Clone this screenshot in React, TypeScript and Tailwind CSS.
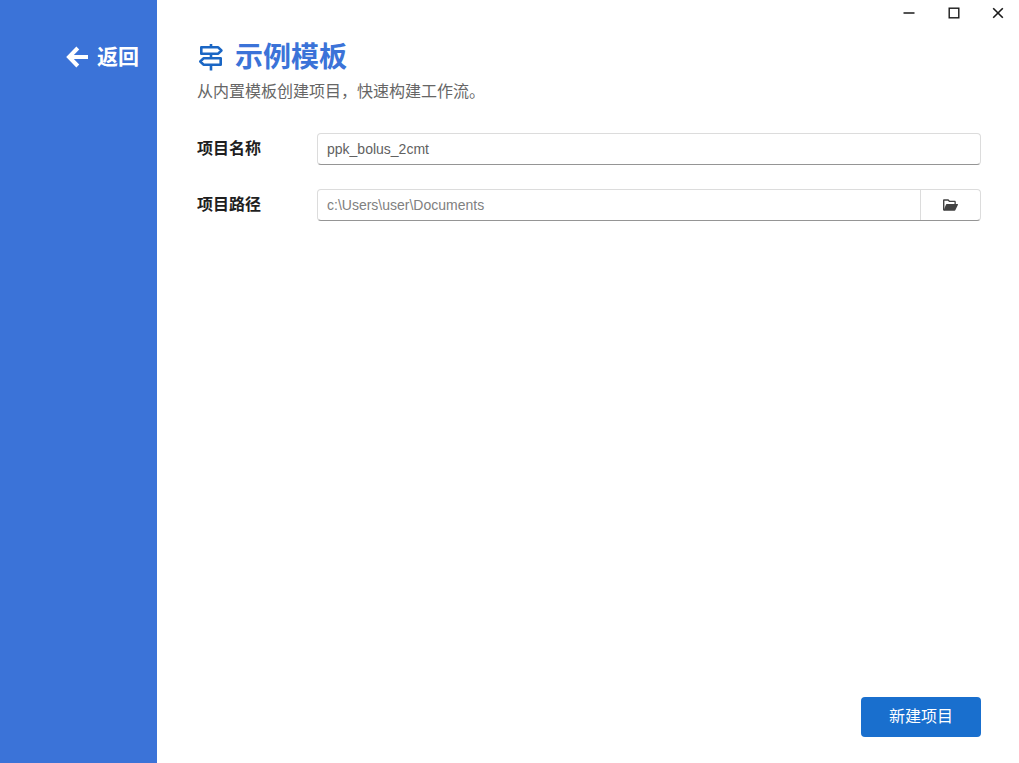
import React, { useState } from "react";

function BackArrow() {
  return (
    <svg width="22" height="22" viewBox="0 0 22 22" fill="none" stroke="currentColor" strokeWidth="4" aria-hidden="true">
      <path d="M11.800 2 3 11l8.800 9M3.500 11H22" />
    </svg>
  );
}

function Signpost() {
  return (
    <svg width="28" height="28" viewBox="0 0 28 28" fill="none" stroke="currentColor" strokeWidth="2.6" aria-hidden="true">
      <path d="M14 0v3M14 9.500v4.500M14 20.500v6" />
      <path d="M4.300 3.300h16.900l3.200 3.200-3.200 3.200H4.300z" strokeLinejoin="round" />
      <path d="M23.700 14.300H6.500l-3.200 3.200 3.200 3.200h17.200z" strokeLinejoin="round" />
    </svg>
  );
}

function FolderOpen() {
  return (
    <svg width="16" height="14" viewBox="0 0 17 14" fill="currentColor" aria-hidden="true">
      <path d="M1.700 12.200 1.500 11.500V2.400h3.600l1.500 1.500h5.600V6h1.400V3.600c0-.7-.5-1.200-1.200-1.200H7.200L6 1.200C5.800 1 5.500.9 5.200.9H1.200C.5.900 0 1.400 0 2.100V11.800c0 .8.5 1.200 1.200 1.200z" />
      <path d="M4 6h11.500c.4 0 .6.400.4.800l-2.700 5.600c-.2.400-.5.600-.9.600H1.200c-.4 0-.6-.4-.4-.8l2.400-5.600c.1-.4.400-.6.800-.6z" />
    </svg>
  );
}

const windowButton = "flex h-[26px] w-[45px] items-center justify-center text-[#1a1a1a] hover:bg-gray-100";

export default function App() {
  const [name, setName] = useState("ppk_bolus_2cmt");
  const [path, setPath] = useState("c:\\Users\\user\\Documents");

  return (
    <div className="flex min-h-screen bg-white font-['Liberation_Sans','Noto_Sans_CJK_SC',sans-serif]">
      <aside className="flex w-[157px] shrink-0 justify-end bg-[#3b73d8] pt-[42px] pr-[18px]">
        <button type="button" className="flex h-[30px] items-center gap-[9px] text-[21px] font-bold text-white">
          <BackArrow />
          返回
        </button>
      </aside>

      <div className="flex min-w-0 flex-1 flex-col">
        <header className="flex justify-end">
          <button type="button" aria-label="最小化" className={windowButton}>
            <svg width="12" height="12" viewBox="0 0 12 12" stroke="currentColor" strokeWidth="1.500" aria-hidden="true">
              <path d="M.500 6h11" />
            </svg>
          </button>
          <button type="button" aria-label="最大化" className={windowButton}>
            <svg width="12" height="12" viewBox="0 0 12 12" fill="none" stroke="currentColor" strokeWidth="1.400" aria-hidden="true">
              <rect x="1.200" y="1.200" width="9.600" height="9.600" />
            </svg>
          </button>
          <button type="button" aria-label="关闭" className="flex h-[26px] w-[43px] items-center justify-center text-[#1a1a1a] hover:bg-gray-100">
            <svg width="12" height="12" viewBox="0 0 12 12" stroke="currentColor" strokeWidth="1.600" aria-hidden="true">
              <path d="m1.200 1.200 9.600 9.600M10.800 1.200l-9.600 9.600" />
            </svg>
          </button>
        </header>

        <form className="flex flex-1 flex-col pt-[11px] pr-[38px] pb-[26px] pl-10" onSubmit={(e) => e.preventDefault()}>
          <h1 className="flex h-[42px] items-center gap-[10px] text-[28px] font-bold text-[#3b73d8]">
            <span className="text-[#1a66c4]">
              <Signpost />
            </span>
            示例模板
          </h1>
          <p className="text-base leading-[26px] text-[#666]">从内置模板创建项目，快速构建工作流。</p>

          <div className="mt-7 flex flex-col gap-6">
            <div className="flex items-center">
              <label htmlFor="name" className="w-[120px] shrink-0 text-base font-bold text-[#1f1f1f]">
                项目名称
              </label>
              <input
                id="name"
                value={name}
                onChange={(e) => setName(e.target.value)}
                className="h-8 min-w-0 flex-1 rounded border border-[#dcdcdc] border-b-[#959595] px-[9px] text-sm text-[#616161] outline-none"
              />
            </div>
            <div className="flex items-center">
              <label htmlFor="path" className="w-[120px] shrink-0 text-base font-bold text-[#1f1f1f]">
                项目路径
              </label>
              <div className="flex h-8 min-w-0 flex-1 rounded border border-[#dcdcdc] border-b-[#959595]">
                <input
                  id="path"
                  value={path}
                  onChange={(e) => setPath(e.target.value)}
                  className="min-w-0 flex-1 px-[9px] text-sm text-[#808080] outline-none"
                />
                <button
                  type="button"
                  aria-label="浏览"
                  className="flex w-[60px] items-center justify-center border-l border-[#dcdcdc] text-[#424242]"
                >
                  <FolderOpen />
                </button>
              </div>
            </div>
          </div>

          <div className="mt-auto flex justify-end">
            <button type="submit" className="h-10 w-[120px] rounded bg-[#196fce] text-base text-white">
              新建项目
            </button>
          </div>
        </form>
      </div>
    </div>
  );
}
